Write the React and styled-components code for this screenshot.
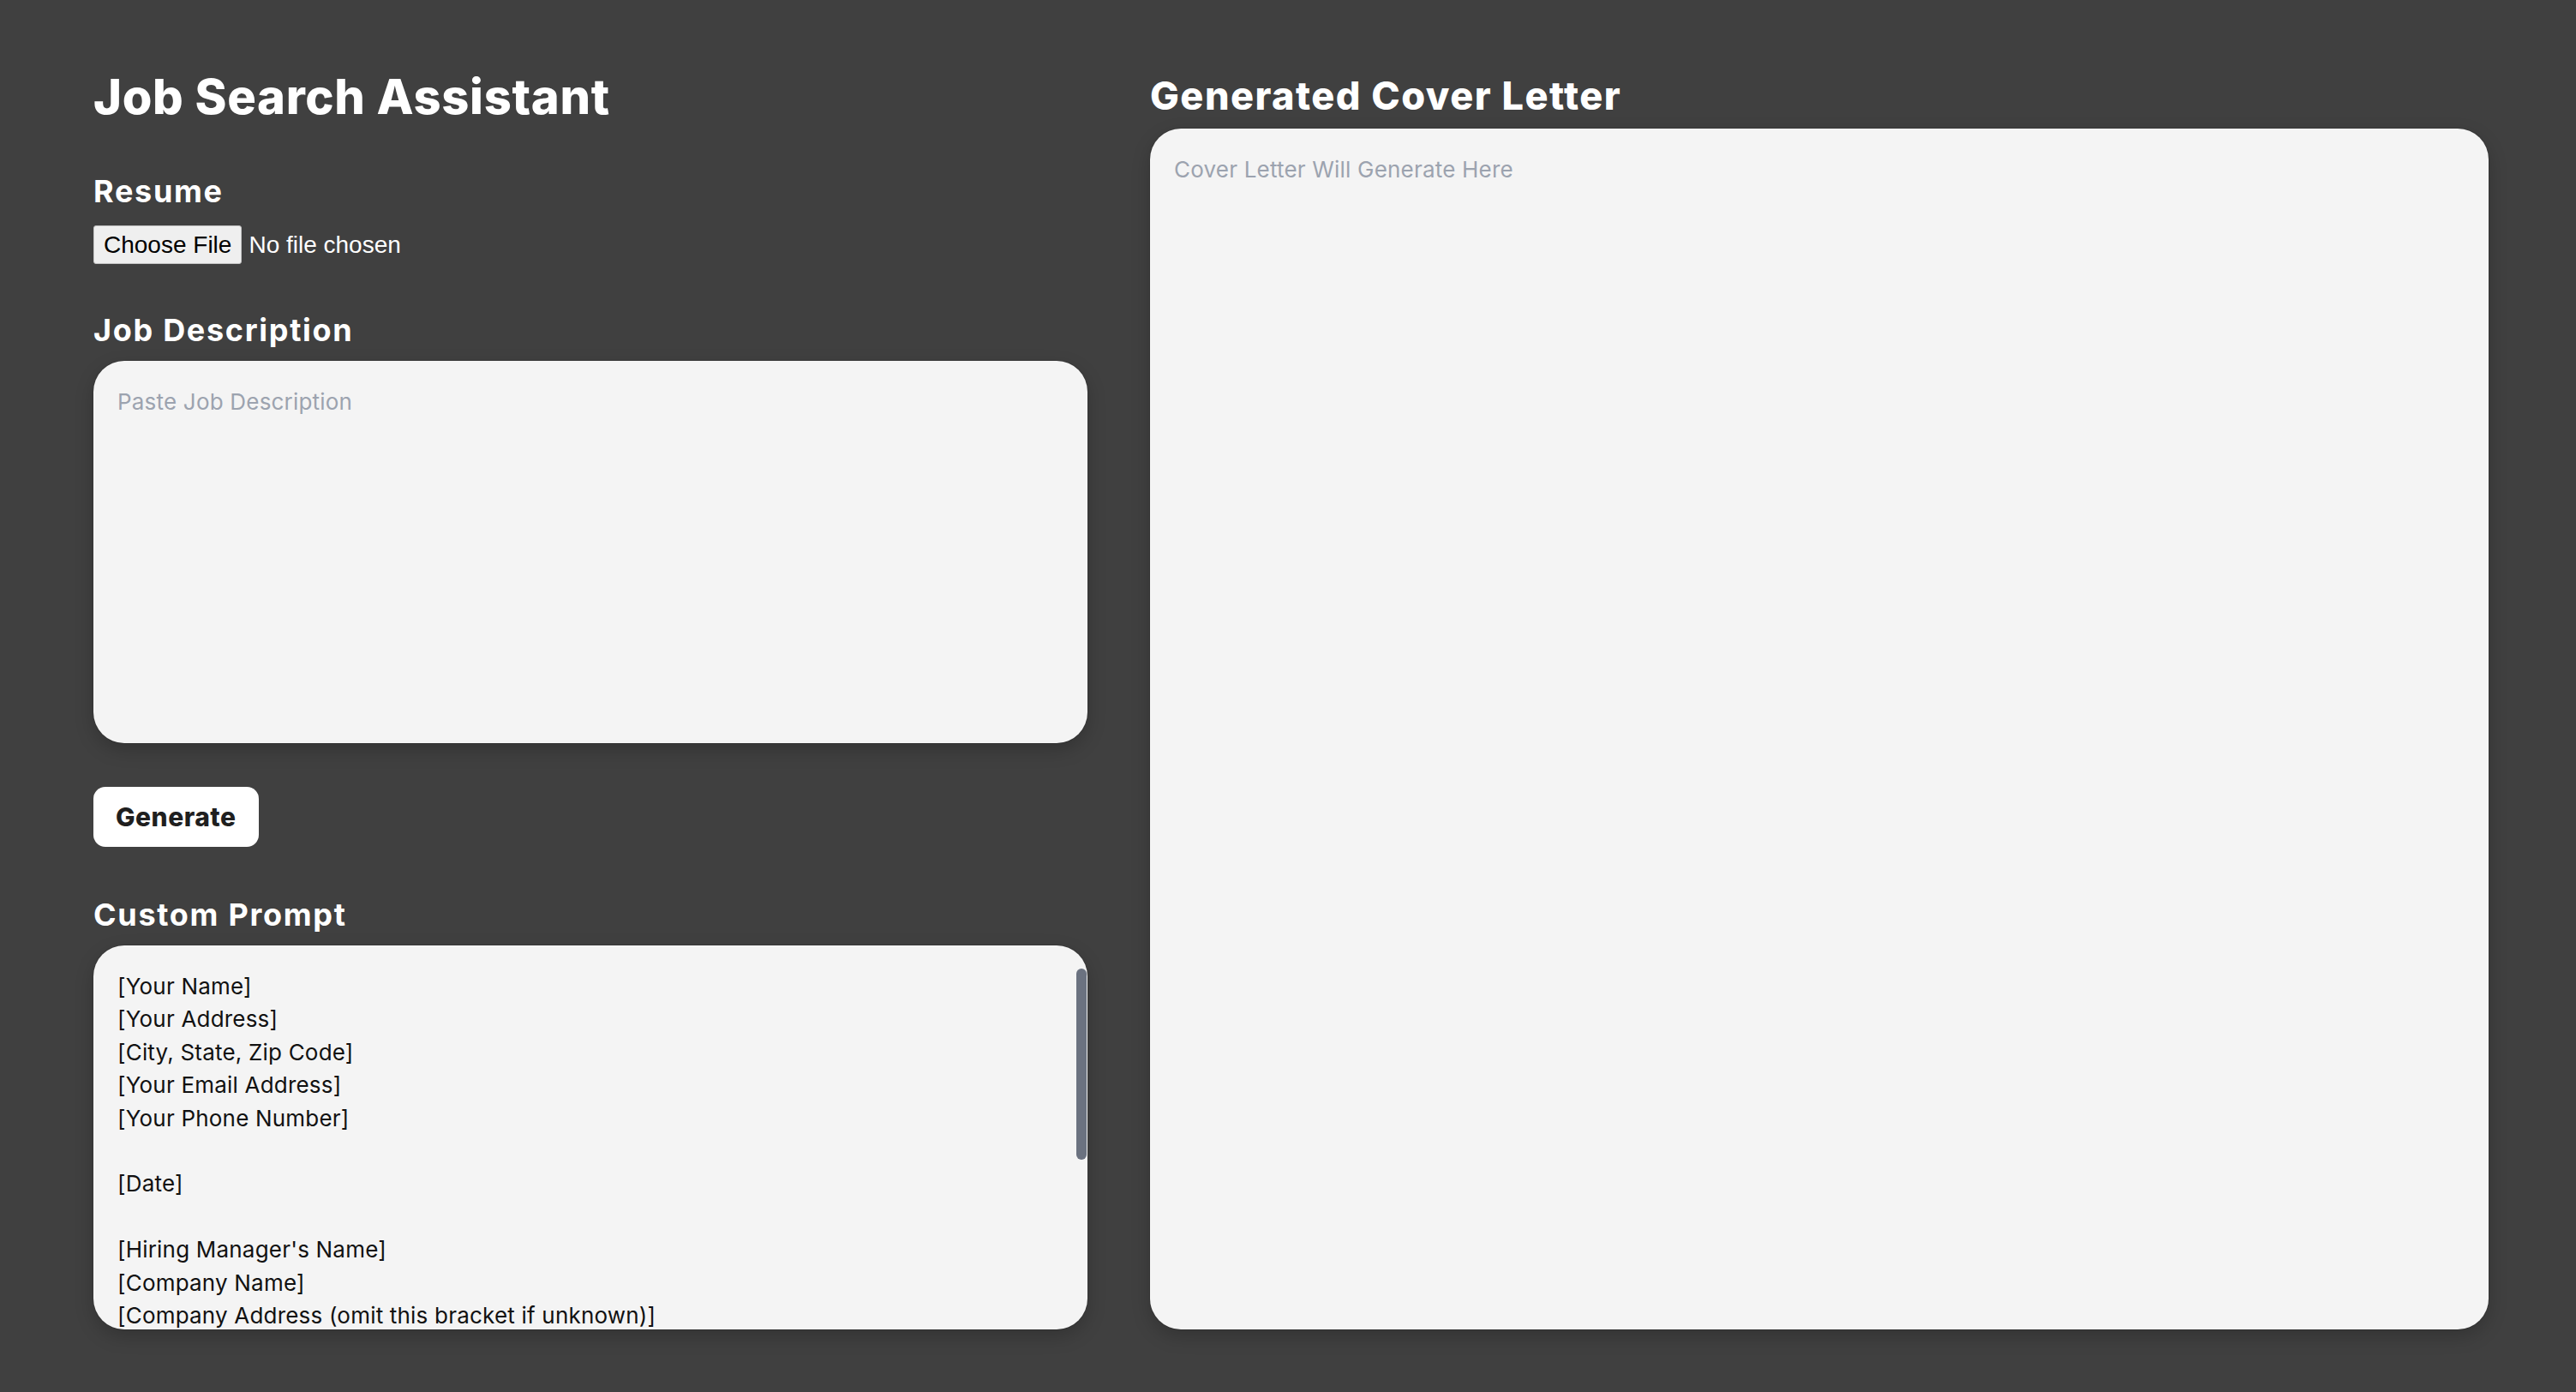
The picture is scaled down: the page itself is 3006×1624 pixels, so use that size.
import React from "react";
import styled, { createGlobalStyle } from "styled-components";

const promptTemplate = `[Your Name]
[Your Address]
[City, State, Zip Code]
[Your Email Address]
[Your Phone Number]

[Date]

[Hiring Manager's Name]
[Company Name]
[Company Address (omit this bracket if unknown)]

Dear [Hiring Manager's Name],

[Opening paragraph: the role and why it fits]
[Body: matching experience from the resume]

Sincerely,
[Your Name]`;

export default function App() {
  return (
    <>
      <GlobalStyle />
      <Page>
        <LeftColumn>
          <Title>Job Search Assistant</Title>

          <Section gap={64}>
            <Label>Resume</Label>
            <FileInput type="file" />
          </Section>

          <Section gap={59}>
            <Label>Job Description</Label>
            <Field placeholder="Paste Job Description" />
          </Section>

          <GenerateButton>Generate</GenerateButton>

          <Section gap={61}>
            <Label>Custom Prompt</Label>
            <FieldWrap>
              <Field tall defaultValue={promptTemplate} />
              <ScrollThumb aria-hidden="true" />
            </FieldWrap>
          </Section>
        </LeftColumn>

        <RightColumn>
          <Heading>Generated Cover Letter</Heading>
          <Output readOnly placeholder="Cover Letter Will Generate Here" />
        </RightColumn>
      </Page>
    </>
  );
}

const GlobalStyle = createGlobalStyle`
  html, body {
    margin: 0;
    background: #404040;
  }
  body {
    font-family: Inter, "Noto Sans", sans-serif;
  }
  * {
    box-sizing: border-box;
  }
`;

const Page = styled.div`
  display: flex;
  gap: 73px;
  padding: 85px 102px 75px 109px;
  min-height: 1624px;
`;

const LeftColumn = styled.div`
  width: 1160px;
  display: flex;
  flex-direction: column;
  align-items: flex-start;
`;

const RightColumn = styled.div`
  flex: 1;
  display: flex;
  flex-direction: column;
  padding-top: 4px;
`;

const Title = styled.h1`
  margin: 0;
  font-size: 56px;
  line-height: 1;
  font-weight: 800;
  letter-spacing: 0.7px;
  color: #fff;
`;

const Heading = styled.h2`
  margin: 0 0 16px;
  font-size: 45px;
  line-height: 1;
  font-weight: 800;
  letter-spacing: 1.5px;
  color: #fff;
`;

const Section = styled.div`
  margin-top: ${({ gap }) => gap}px;
  width: 100%;
  display: flex;
  flex-direction: column;
  align-items: flex-start;
`;

const Label = styled.h3`
  margin: 0 0 18px;
  font-size: 36px;
  line-height: 1;
  font-weight: 700;
  letter-spacing: 1.7px;
  color: #fff;
`;

const FileInput = styled.input`
  height: 45px;
  margin-top: 4px;
  font-family: "Liberation Sans", Arial, sans-serif;
  font-size: 28px;
  color: #fff;

  &::file-selector-button {
    height: 45px;
    margin-right: 8px;
    padding: 0 11px;
    font-family: inherit;
    font-size: inherit;
    color: #000;
    background: #efefef;
    border: 1px solid #c4c4c4;
    border-radius: 3px;
  }
`;

const FieldWrap = styled.div`
  position: relative;
  width: 100%;
`;

const Field = styled.textarea`
  display: block;
  width: 100%;
  height: ${({ tall }) => (tall ? "448px" : "446px")};
  padding: 29px 28px;
  border: none;
  border-radius: 36px;
  background: #f4f4f4;
  box-shadow: 0 0 0 1px rgba(0, 0, 0, 0.08), 0 8px 22px rgba(0, 0, 0, 0.2);
  resize: none;
  outline: none;
  font-family: Inter, "Noto Sans", sans-serif;
  font-size: 26px;
  line-height: 38.4px;
  letter-spacing: 0.2px;
  color: #111;

  &::placeholder {
    color: #9ca3af;
  }
`;

const ScrollThumb = styled.div`
  position: absolute;
  top: 27px;
  right: 1px;
  width: 12px;
  height: 223px;
  border-radius: 6px;
  background: #6b7280;
  pointer-events: none;
`;

const Output = styled(Field)`
  flex: 1;
  height: auto;
`;

const GenerateButton = styled.button`
  margin-top: 51px;
  height: 70px;
  padding: 0 26px;
  border: none;
  border-radius: 14px;
  background: #fff;
  font-family: Inter, "Noto Sans", sans-serif;
  font-size: 30px;
  font-weight: 800;
  letter-spacing: 0.5px;
  color: #1f1f1f;
  cursor: pointer;
`;
